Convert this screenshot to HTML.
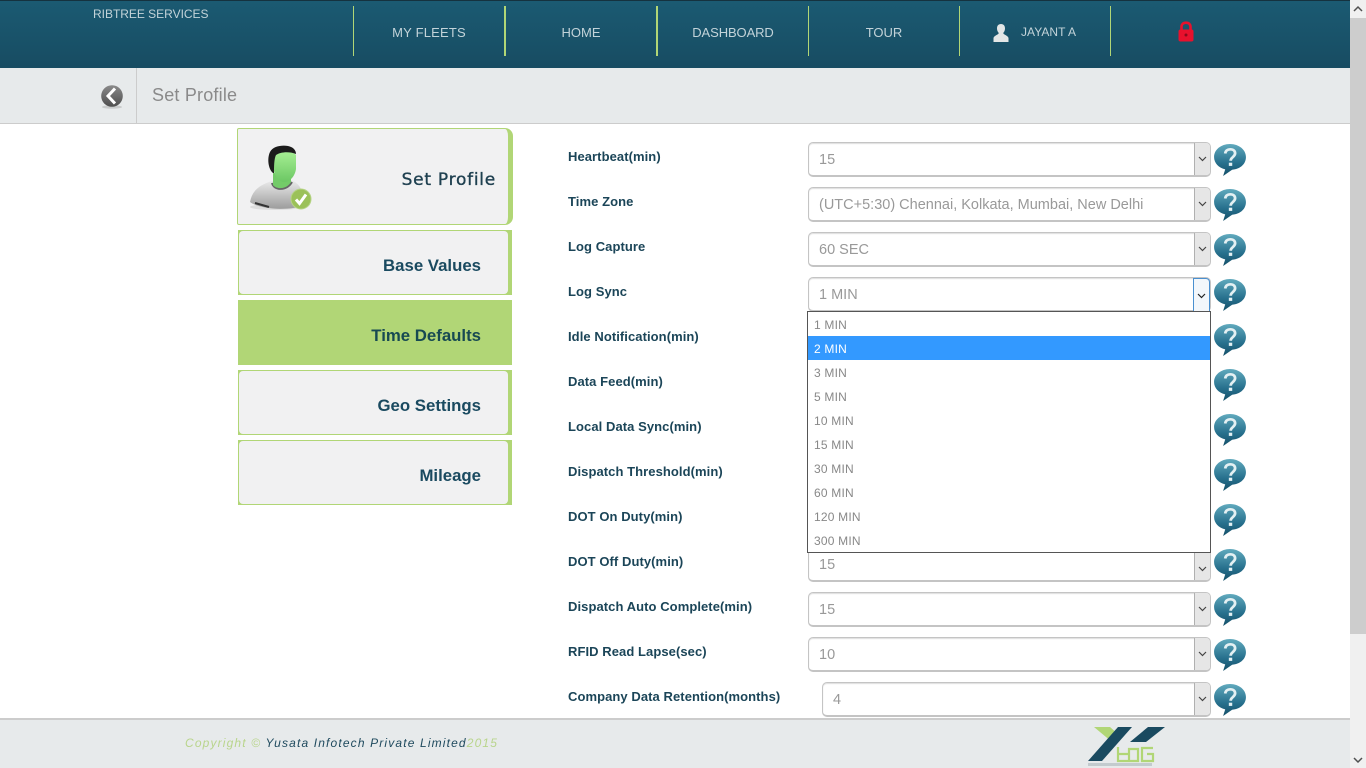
<!DOCTYPE html>
<html><head><meta charset="utf-8">
<style>
html,body{margin:0;padding:0;width:1366px;height:768px;overflow:hidden;background:#fff;font-family:"Liberation Sans",sans-serif}
div,span{position:absolute;box-sizing:border-box;white-space:nowrap}
svg{position:absolute;overflow:visible}
#hdr{left:0;top:0;width:1350px;height:68px;background:linear-gradient(#1b5a72,#174c62);border-top:1px solid #15323f}
.sep{top:6px;height:50px;width:1px;background:#b1d676}
.nav{top:25px;font-size:13px;line-height:15px;color:#c3d3d9;text-align:center;width:150px}
#sub{left:0;top:68px;width:1350px;height:56px;background:#e7eaeb;border-bottom:1px solid #ccc}
.tab{left:238px;width:274px;height:65px;background:#b1d676;font-weight:bold;font-size:16.8px;line-height:15px;color:#1a4a60;text-align:right}
.tab::before{content:"";position:absolute;left:1px;top:1px;right:4px;bottom:1px;background:#f1f1f2;border-radius:4px}
.tab span{right:31px;top:28px}
.lb{left:568px;font-size:13px;line-height:16px;font-weight:bold;color:#1b4558;letter-spacing:.07px;margin-top:1px}
.sel{left:808px;width:403px;height:35px;background:#fff;border:1px solid #c4c4c4;border-bottom-width:2px;border-radius:5px;box-shadow:inset 0 1px 1px #ddd;font-size:14.5px;line-height:35px;color:#999;padding-left:10px}
.ar{right:0;top:0;bottom:0;width:16px;background:#e6e6e6;border-left:1px solid #b0b0b0;border-radius:0 4px 4px 0}
.ar svg{left:3px;top:13px}
.opt{left:0;width:402px;height:24px;font-size:12px;line-height:26px;color:#888;padding-left:6px;letter-spacing:.2px}
</style></head><body>
<svg width="0" height="0" style="position:absolute"><defs>
<linearGradient id="q" x1="0" y1="0" x2="0" y2="1"><stop offset="0" stop-color="#60a9bd"/><stop offset=".6" stop-color="#27708d"/><stop offset="1" stop-color="#154f68"/></linearGradient>
<symbol id="help" viewBox="0 0 32 34" preserveAspectRatio="none"><path d="M16 1C7.500 1 1 6.800 1 14c0 6 4.300 10.800 10.500 12.400L9.500 33 18 26.700C26 26 31 20.800 31 14 31 6.800 24.500 1 16 1z" fill="url(#q)"/><path d="M11.500 10.500C11.800 7.800 13.600 6.300 16.200 6.300c2.800 0 4.600 1.600 4.600 4 0 3.800-4.200 3.700-4.200 7.500" fill="none" stroke="#e4f0f3" stroke-width="2.600"/><rect x="14.900" y="19.700" width="3.200" height="3.200" fill="#e4f0f3"/></symbol>
</defs></svg>

<div id="hdr"></div>
<div style="left:93px;top:7px;font-size:12px;line-height:14px;color:#c3d3d9;letter-spacing:-.02px">RIBTREE SERVICES</div>
<div class="sep" style="left:353px"></div><div class="sep" style="left:504px;width:2px"></div><div class="sep" style="left:656px;width:2px"></div><div class="sep" style="left:808px"></div><div class="sep" style="left:959px"></div><div class="sep" style="left:1110px"></div>
<div class="nav" style="left:354px;letter-spacing:.2px">MY FLEETS</div>
<div class="nav" style="left:506px">HOME</div>
<div class="nav" style="left:658px;letter-spacing:-.1px">DASHBOARD</div>
<div class="nav" style="left:809px">TOUR</div>
<svg style="left:993px;top:24px" width="16" height="18" viewBox="0 0 16 18"><path d="M8 0C5.300 0 4 1.800 4 4.500 4 6.500 4.800 8 5.800 9 5.800 10.500 1 11.500 .5 14V18H15.500V14C15 11.500 10.200 10.500 10.200 9 11.200 8 12 6.500 12 4.500 12 1.800 10.700 0 8 0z" fill="#e3e6e6"/></svg>
<div style="left:1021px;top:25px;font-size:12px;line-height:15px;color:#c3d3d9;letter-spacing:.05px">JAYANT A</div>
<svg style="left:1177px;top:21px" width="18" height="21" viewBox="0 0 18 21"><path d="M4.500 9V6C4.500 3.200 6.300 1.700 9 1.700S13.500 3.200 13.500 6V9" fill="none" stroke="#e8112d" stroke-width="2.600"/><rect x="1.500" y="8.500" width="15" height="12" rx="2" fill="#e8112d"/><circle cx="9" cy="14" r="1.500" fill="#8b0a1c"/></svg>

<div id="sub"></div>
<div style="left:136px;top:68px;width:1px;height:55px;background:#ccc"></div>
<svg style="left:100px;top:84px" width="24" height="26" viewBox="0 0 24 26"><defs><linearGradient id="b" x1="0" y1="0" x2="0" y2="1"><stop offset="0" stop-color="#8a8a8a"/><stop offset="1" stop-color="#4e4e4e"/></linearGradient></defs><ellipse cx="12" cy="23" rx="10" ry="1.800" fill="#c9cbcb"/><circle cx="12" cy="12" r="10.800" fill="url(#b)"/><path d="M15 4.500 8 12l7 7.500" fill="none" stroke="#fff" stroke-width="3"/></svg>
<div style="left:152px;top:85px;font-size:18px;line-height:21px;color:#8a8a8a;letter-spacing:.2px">Set Profile</div>

<div style="left:237px;top:128px;width:276px;height:97px;background:#f1f1f2;border:1px solid #b1d676;border-right:5px solid #b1d676;border-radius:2px 8px 8px 2px"><span style="right:12px;top:44px;font:normal 17px/15px 'DejaVu Sans',sans-serif;-webkit-text-stroke:.35px #1f4050;color:#1f4050;letter-spacing:.75px">Set Profile</span></div>
<svg style="left:249px;top:145px" width="64" height="66" viewBox="0 0 64 66"><defs><linearGradient id="sh" x1="0" y1="0" x2="0" y2="1"><stop offset="0" stop-color="#ececec"/><stop offset="1" stop-color="#9c9c9c"/></linearGradient><linearGradient id="fc" x1="0" y1="0" x2="0" y2="1"><stop offset="0" stop-color="#a6ef93"/><stop offset="1" stop-color="#6cc764"/></linearGradient></defs><ellipse cx="26" cy="62" rx="25" ry="3" fill="#ddd"/><path d="M1 57C3 46 10 40 23 36L42 35C50 38 55 46 57 60 40 66 12 65 1 57z" fill="url(#sh)"/><path d="M23 38C25 46 38 46 43 37" fill="none" stroke="#666" stroke-width="2"/><path d="M6 58 20 62" stroke="#333" stroke-width="2"/><path d="M24 28V40C28 45 38 44 42 37V28z" fill="#73cb68"/><path d="M25 10C32 5 44 6 47 10V24C46 31 41 37 35 37 30 37 26 31 25 26z" fill="url(#fc)"/><path d="M24 28C19 24 18 13 21 7 24 1 33 0 39 1 44 2 47 5 47 9 40 6 31 7 27 10 25 14 25 22 25 28z" fill="#1b1b1b"/><circle cx="52" cy="54" r="10" fill="#9bc159"/><circle cx="52" cy="54" r="10" fill="none" stroke="#b6d487"/><path d="M47 54.500 50.500 58.500 57 49.500" fill="none" stroke="#fff" stroke-width="3"/></svg>
<div class="tab" style="top:230px"><span>Base Values</span></div>
<div style="left:238px;top:300px;width:274px;height:65px;background:#b1d676;font-weight:bold;font-size:16.8px;line-height:15px;color:#174a52"><span style="right:31px;top:28px">Time Defaults</span></div>
<div class="tab" style="top:370px"><span>Geo Settings</span></div>
<div class="tab" style="top:440px"><span>Mileage</span></div>

<div class="lb" style="top:148px">Heartbeat(min)</div>
<div class="lb" style="top:193px">Time Zone</div>
<div class="lb" style="top:238px">Log Capture</div>
<div class="lb" style="top:283px">Log Sync</div>
<div class="lb" style="top:328px">Idle Notification(min)</div>
<div class="lb" style="top:373px">Data Feed(min)</div>
<div class="lb" style="top:418px">Local Data Sync(min)</div>
<div class="lb" style="top:463px">Dispatch Threshold(min)</div>
<div class="lb" style="top:508px">DOT On Duty(min)</div>
<div class="lb" style="top:553px">DOT Off Duty(min)</div>
<div class="lb" style="top:598px">Dispatch Auto Complete(min)</div>
<div class="lb" style="top:643px">RFID Read Lapse(sec)</div>
<div class="lb" style="top:688px">Company Data Retention(months)</div>

<div class="sel" style="top:142px">15<div class="ar"><svg width="9" height="6"><path d="M1 1l3.500 3.500L8 1" fill="none" stroke="#444" stroke-width="1.200"/></svg></div></div>
<div class="sel" style="top:187px">(UTC+5:30) Chennai, Kolkata, Mumbai, New Delhi<div class="ar"><svg width="9" height="6"><path d="M1 1l3.500 3.500L8 1" fill="none" stroke="#444" stroke-width="1.200"/></svg></div></div>
<div class="sel" style="top:232px">60 SEC<div class="ar"><svg width="9" height="6"><path d="M1 1l3.500 3.500L8 1" fill="none" stroke="#444" stroke-width="1.200"/></svg></div></div>
<div class="sel" style="top:277px">1 MIN<div class="ar" style="background:#f3f7fb;border:1px solid #4a90d0;border-radius:0 4px 0 0;width:17px;bottom:-2px"><svg width="9" height="6" style="top:14px"><path d="M1 1l3.500 3.500L8 1" fill="none" stroke="#222" stroke-width="1.200"/></svg></div></div>
<div class="sel" style="top:547px">15<div class="ar"><svg style="top:18px" width="9" height="6"><path d="M1 1l3.500 3.500L8 1" fill="none" stroke="#444" stroke-width="1.200"/></svg></div></div>
<div class="sel" style="top:592px">15<div class="ar"><svg width="9" height="6"><path d="M1 1l3.500 3.500L8 1" fill="none" stroke="#444" stroke-width="1.200"/></svg></div></div>
<div class="sel" style="top:637px">10<div class="ar"><svg width="9" height="6"><path d="M1 1l3.500 3.500L8 1" fill="none" stroke="#444" stroke-width="1.200"/></svg></div></div>
<div class="sel" style="top:682px;left:822px;width:389px">4<div class="ar"><svg width="9" height="6"><path d="M1 1l3.500 3.500L8 1" fill="none" stroke="#444" stroke-width="1.200"/></svg></div></div>

<svg style="left:1213px;top:143px" width="34" height="34"><use href="#help" width="34" height="34"/></svg>
<svg style="left:1213px;top:188px" width="34" height="34"><use href="#help" width="34" height="34"/></svg>
<svg style="left:1213px;top:233px" width="34" height="34"><use href="#help" width="34" height="34"/></svg>
<svg style="left:1213px;top:278px" width="34" height="34"><use href="#help" width="34" height="34"/></svg>
<svg style="left:1213px;top:323px" width="34" height="34"><use href="#help" width="34" height="34"/></svg>
<svg style="left:1213px;top:368px" width="34" height="34"><use href="#help" width="34" height="34"/></svg>
<svg style="left:1213px;top:413px" width="34" height="34"><use href="#help" width="34" height="34"/></svg>
<svg style="left:1213px;top:458px" width="34" height="34"><use href="#help" width="34" height="34"/></svg>
<svg style="left:1213px;top:503px" width="34" height="34"><use href="#help" width="34" height="34"/></svg>
<svg style="left:1213px;top:548px" width="34" height="34"><use href="#help" width="34" height="34"/></svg>
<svg style="left:1213px;top:593px" width="34" height="34"><use href="#help" width="34" height="34"/></svg>
<svg style="left:1213px;top:638px" width="34" height="34"><use href="#help" width="34" height="34"/></svg>
<svg style="left:1213px;top:683px" width="34" height="34"><use href="#help" width="34" height="34"/></svg>

<div style="left:807px;top:311px;width:404px;height:242px;background:#fff;border:1px solid #555">
<div class="opt" style="top:0">1 MIN</div>
<div class="opt" style="top:24px;background:#3399ff;color:#fff">2 MIN</div>
<div class="opt" style="top:48px">3 MIN</div>
<div class="opt" style="top:72px">5 MIN</div>
<div class="opt" style="top:96px">10 MIN</div>
<div class="opt" style="top:120px">15 MIN</div>
<div class="opt" style="top:144px">30 MIN</div>
<div class="opt" style="top:168px">60 MIN</div>
<div class="opt" style="top:192px">120 MIN</div>
<div class="opt" style="top:216px">300 MIN</div>
</div>

<div style="left:0;top:718px;width:1350px;height:50px;background:#e7eaeb;border-top:2px solid #ccc"></div>
<div style="left:185px;top:736px;font-size:12px;line-height:15px;font-style:italic;letter-spacing:1.15px;color:#b9d58c">Copyright © <span style="position:static;color:#1f4a5e">Yusata Infotech Private Limited</span>2015</div>
<svg style="left:1086px;top:725px" width="82" height="43" viewBox="0 0 82 43"><path d="M8 2H24L33 10 26 17z" fill="#b1d676"/><path d="M32 2H46L16 36H2z" fill="#1a4a60"/><path d="M62 2H79L60 17H44z" fill="#1a4a60"/><path d="M32 22V36H42M32 29H43M43 24H52V36H43zM67 23H56V36H67V29H61" fill="none" stroke="#b1d676" stroke-width="2.200"/><rect x="2" y="38" width="64" height="3" fill="#c3cbce"/></svg>

<div style="left:1350px;top:0;width:16px;height:768px;background:#f0f0f0"></div>
<div style="left:1350px;top:18px;width:16px;height:616px;background:#cdcdcd"></div>
<svg style="left:1353px;top:6px" width="10" height="6"><path d="M1 5l4-4 4 4" fill="none" stroke="#505050" stroke-width="1.500"/></svg>
<svg style="left:1353px;top:757px" width="10" height="6"><path d="M1 1l4 4 4-4" fill="none" stroke="#505050" stroke-width="1.500"/></svg>
</body></html>
